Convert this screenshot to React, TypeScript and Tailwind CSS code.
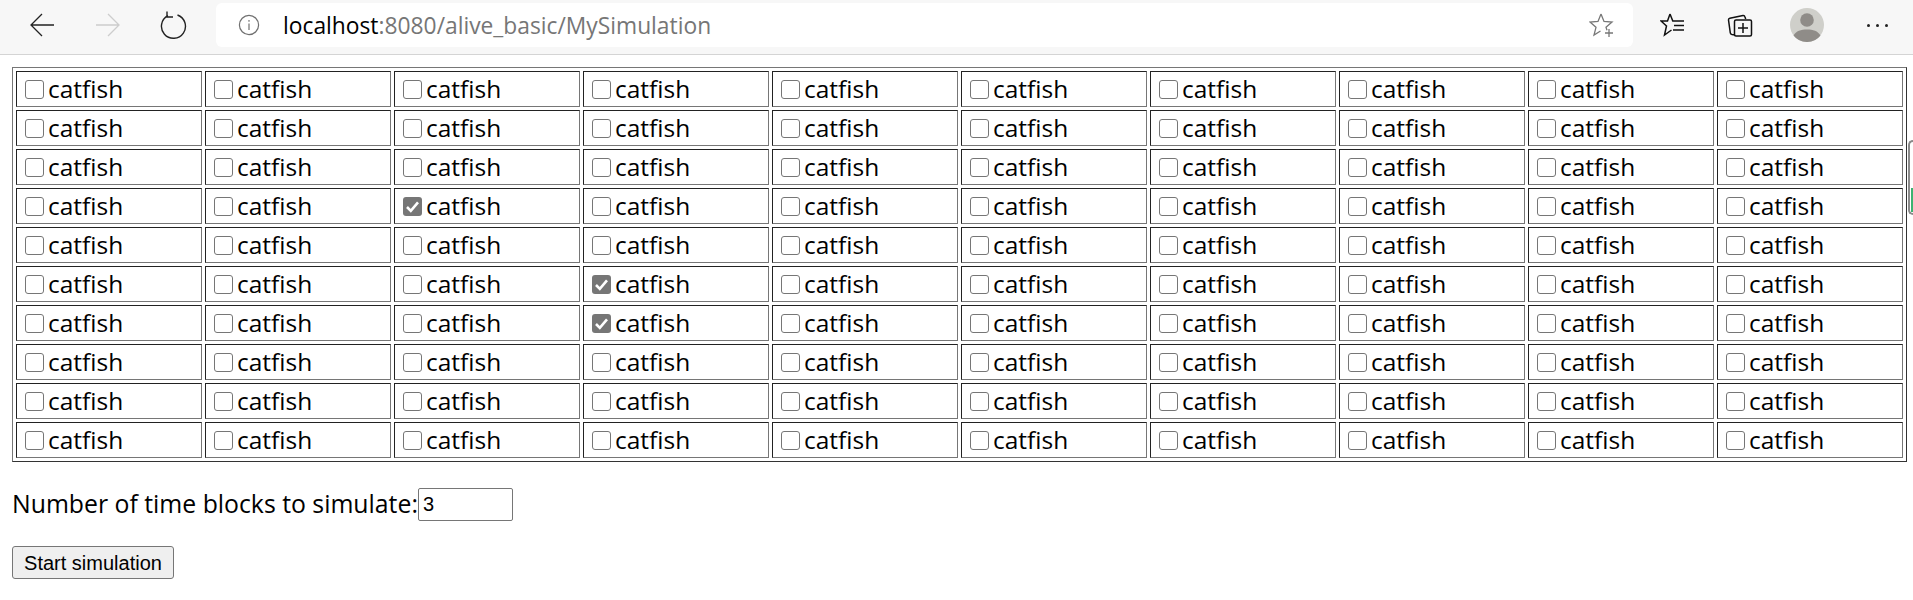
const rows = Array.from({ length: 10 }, (_, i) => i);
const cols = Array.from({ length: 10 }, (_, i) => i);
const checked = ["3-2", "5-3", "6-3"];

function Checkbox({ on }: { on: boolean }) {
  return (
    <span
      className={
        on
          ? "flex h-[19px] w-[19px] shrink-0 items-center justify-center rounded-[3px] bg-[#767676]"
          : "flex h-[19px] w-[19px] shrink-0 items-center justify-center rounded-[3px] border border-[#767676] bg-white"
      }
    >
      {on && (
        <svg className="h-[15px] w-[15px]" viewBox="0 0 15 15" fill="none" stroke="#fff" strokeWidth={2.6}>
          <path d="M2 8l3.8 3.8L13 3.4" />
        </svg>
      )}
    </span>
  );
}

function Toolbar() {
  return (
    <div className="flex h-[55px] items-center border-b border-[#d4d4d4] bg-[#f7f7f7] pb-1">
      <div className="flex w-[216px] shrink-0 items-center pl-[30px]">
        <svg className="h-6 w-6" viewBox="0 0 24 24" fill="none" stroke="#222" strokeWidth={1.3}>
          <path d="M24 12H1M12 1L1 12l11 11" />
        </svg>
        <svg className="ml-[42px] h-6 w-6" viewBox="0 0 24 24" fill="none" stroke="#cdcdcd" strokeWidth={1.3}>
          <path d="M0 12h23M12 1l11 11-11 11" />
        </svg>
        <svg className="ml-[39px] h-7 w-7" viewBox="0 0 28 28" fill="none" stroke="#222" strokeWidth={1.4}>
          <path d="M9 4.6a12 12 0 1 0 9.500 -0.600" />
          <path d="M8 0.500V6h6" />
        </svg>
      </div>
      <div className="flex h-[44px] w-[1417px] shrink-0 items-center rounded-md bg-white pl-[22px] pr-[18px]">
        <svg className="h-[22px] w-[22px]" viewBox="0 0 22 22" fill="none" stroke="#707070" strokeWidth={1.2}>
          <circle cx="11" cy="11" r="9.600" />
          <path d="M11 9.500v6.500M11 6v1.800" />
        </svg>
        <span className="ml-[23px] pt-[3px] font-['Open_Sans',sans-serif] text-[22.8px] text-[#767676]">
          <span className="text-black">localhost</span>:8080/alive_basic/MySimulation
        </span>
        <svg className="ml-auto h-[26px] w-[26px]" viewBox="0 0 26 26" fill="none" stroke="#777" strokeWidth={1.3}>
          <path d="M12 2l3 7.500 8 .6-6 5.200 1 3M12 2L9 9.500l-8 .6 6 5.200L5 23l6.500-4" />
          <path d="M20 17v8M16 21h8" />
        </svg>
      </div>
      <div className="flex flex-1 items-center">
        <svg className="ml-[27px] h-[26px] w-[26px]" viewBox="0 0 26 26" fill="none" stroke="#111" strokeWidth={1.500}>
          <path d="M10 2l2.800 7H24M10 2L7.500 9H1l5.500 5L4.500 23l7-5" />
          <path d="M14 13.500h10M13 18h11" />
        </svg>
        <svg className="ml-[41px] h-[26px] w-[26px]" viewBox="0 0 26 26" fill="none" stroke="#111" strokeWidth={1.500}>
          <path d="M8 23l-3-.5q-1.500-.3-1.700-1.700L1.500 8q-.2-1.500 1.300-1.800L16 3.500q1.500-.2 2 1.500l.7 2" />
          <rect x="7.500" y="8" width="17" height="16" rx="1.500" />
          <path d="M16 11v10M11 16h10" />
        </svg>
        <svg className="ml-[37px] h-[34px] w-[34px]" viewBox="0 0 34 34">
          <circle cx="17" cy="17" r="17" fill="#cfcfca" />
          <circle cx="17" cy="12" r="6.800" fill="#8f8c88" />
          <path d="M3.500 27.500C6 23 11 21.500 17 21.500s11 1.500 13.500 6A17 17 0 0 1 17 34 17 17 0 0 1 3.500 27.500z" fill="#8f8c88" />
        </svg>
        <div className="ml-[43px] flex gap-[6px]">
          <span className="h-[3px] w-[3px] rounded-full bg-[#222]" />
          <span className="h-[3px] w-[3px] rounded-full bg-[#222]" />
          <span className="h-[3px] w-[3px] rounded-full bg-[#222]" />
        </div>
      </div>
    </div>
  );
}

export default function App() {
  return (
    <div className="relative h-[600px] overflow-hidden bg-white font-['Open_Sans',sans-serif] text-black">
      <Toolbar />

      <div className="px-3 pt-3">
        <table className="w-[1895px] table-fixed border-separate border-spacing-[3px] border border-[#767676] border-r-[#333] border-b-[#333]">
          <tbody>
            {rows.map((r) => (
              <tr key={r}>
                {cols.map((c) => (
                  <td key={c} className="h-9 border border-[#767676] border-t-[#222] border-l-[#222] p-0">
                    <label className="flex items-center pl-2">
                      <Checkbox on={checked.includes(`${r}-${c}`)} />
                      <span className="ml-[4px] text-[24.5px] leading-[34px]">catfish</span>
                    </label>
                  </td>
                ))}
              </tr>
            ))}
          </tbody>
        </table>

        <div className="mt-[25px] flex items-center">
          <span className="pb-[1px] text-[24.8px] leading-[33px]">Number of time blocks to simulate:</span>
          <input
            readOnly
            value="3"
            className="h-[33px] w-[95px] rounded-[2px] border border-[#767676] px-[4px] font-['Liberation_Sans',sans-serif] text-[20px]"
          />
        </div>

        <button className="mt-[25px] block h-[33px] w-[162px] rounded-[3px] border border-[#767676] bg-[#efefef] font-['Liberation_Sans',sans-serif] text-[20px]">
          Start simulation
        </button>
      </div>

      {/* sliver of a panel peeking in at the right edge */}
      <div className="absolute right-0 top-[140px] h-[75px] w-[5px] rounded-l-[5px] border-y-2 border-l-2 border-[#8a8a8a] bg-white">
        <div className="absolute bottom-[1px] right-0 h-[24px] w-[2px] bg-[#3cb371]" />
      </div>
    </div>
  );
}
